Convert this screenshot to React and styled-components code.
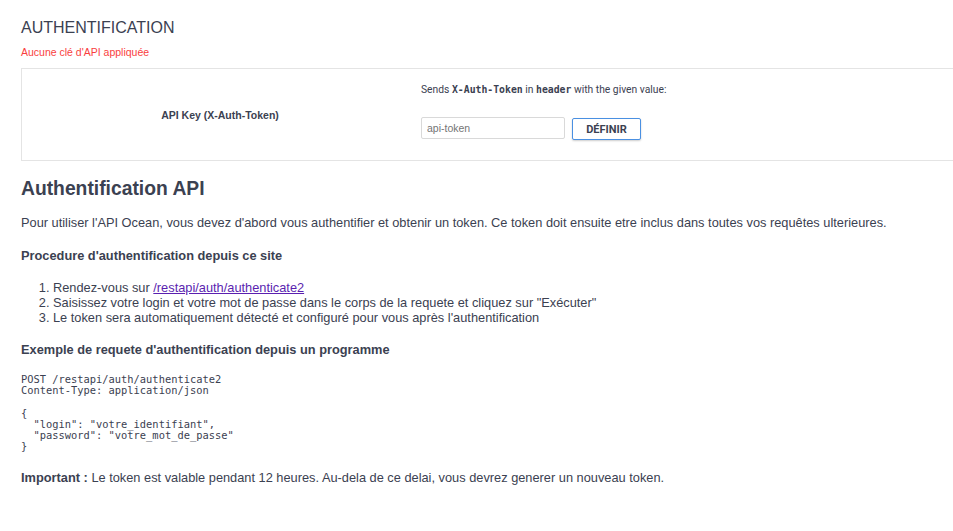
import React from 'react';
import styled, { createGlobalStyle } from 'styled-components';

const GlobalStyle = createGlobalStyle`
   html, body {
      margin: 0;
      padding: 0;
      background: #fff;
      overflow-x: hidden;
   }

   body {
      font-family: 'Liberation Sans', Arial, sans-serif;
      color: #3b4151;
   }
`;

const Page = styled.div`
   padding: 19px 0 40px 21px;
`;

const Title = styled.h4`
   margin: 0;
   font-size: 16px;
   font-weight: 400;
   line-height: 18px;
   text-transform: uppercase;
   color: #3b4151;
`;

const Warning = styled.p`
   margin: 9px 0 0;
   font-size: 10.5px;
   line-height: 13px;
   color: #f93e3e;
`;

const AuthBox = styled.div`
   margin-top: 9px;
   width: calc(100% + 20px);
   border: 1px solid #e4e4e4;
   display: grid;
   grid-template-columns: 396px 1fr;
   align-items: center;
   min-height: 90px;
`;

const KeyName = styled.div`
   text-align: center;
   font-size: 10.5px;
   font-weight: 700;
   color: #3b4151;
`;

const KeyForm = styled.div`
   padding: 14px 0 20px 3px;
   font-family: Roboto, 'Liberation Sans', sans-serif;
`;

const Hint = styled.p`
   margin: 0;
   font-size: 10.3px;
   line-height: 14px;
   color: #3b4151;

   code {
      font-family: 'DejaVu Sans Mono', monospace;
      font-weight: 700;
      font-size: 9.8px;
   }
`;

const FormRow = styled.div`
   display: flex;
   align-items: flex-start;
   gap: 7px;
   margin-top: 20px;
`;

const TokenInput = styled.input`
   box-sizing: border-box;
   width: 144px;
   height: 22px;
   padding: 0 5px;
   border: 1px solid #d9d9d9;
   border-radius: 2px;
   font-family: 'Liberation Sans', Arial, sans-serif;
   font-size: 10.5px;
   outline: none;

   ::placeholder {
      color: #9b9b9b;
   }
`;

const SetButton = styled.button`
   box-sizing: border-box;
   width: 69px;
   height: 22px;
   margin-top: 1px;
   border: 1px solid #4a90e2;
   border-radius: 2px;
   background: #fff;
   box-shadow: 0 1px 2px rgba(0, 0, 0, 0.2);
   font-family: Roboto, 'Liberation Sans', sans-serif;
   font-size: 11px;
   font-weight: 700;
   color: #3b4151;
   cursor: pointer;
`;

const Section = styled.section`
   padding-right: 20px;
   font-size: 12.8px;
   line-height: 15px;
   color: #3b4151;
`;

const Heading = styled.h2`
   margin: 17px 0 0;
   font-size: 19.3px;
   line-height: 22px;
   font-weight: 700;
`;

const Paragraph = styled.p`
   margin: ${({ top }) => top || 15}px 0 0;
`;

const SubHeading = styled.h3`
   margin: ${({ top }) => top || 18}px 0 0;
   font-size: 12.8px;
   line-height: 15px;
   font-weight: 700;
`;

const Steps = styled.ol`
   margin: 17px 0 0;
   padding-left: 32px;
`;

const Link = styled.a`
   color: #5b1fb0;
   text-decoration: underline;
`;

const Code = styled.pre`
   margin: 17px 0 0;
   font-family: 'DejaVu Sans Mono', monospace;
   font-size: 10.4px;
   line-height: 11.2px;
   color: #3b4151;
`;

const requestExample = `POST /restapi/auth/authenticate2
Content-Type: application/json

{
  "login": "votre_identifiant",
  "password": "votre_mot_de_passe"
}`;

const App = () => (
   <Page>
      <GlobalStyle />
      <Title>Authentification</Title>
      <Warning>Aucune clé d'API appliquée</Warning>
      <AuthBox>
         <KeyName>API Key (X-Auth-Token)</KeyName>
         <KeyForm>
            <Hint>
               Sends <code>X-Auth-Token</code> in <code>header</code> with the given value:
            </Hint>
            <FormRow>
               <TokenInput placeholder="api-token" />
               <SetButton>DÉFINIR</SetButton>
            </FormRow>
         </KeyForm>
      </AuthBox>
      <Section>
         <Heading>Authentification API</Heading>
         <Paragraph>
            Pour utiliser l'API Ocean, vous devez d'abord vous authentifier et obtenir un token. Ce
            token doit ensuite etre inclus dans toutes vos requêtes ulterieures.
         </Paragraph>
         <SubHeading>Procedure d'authentification depuis ce site</SubHeading>
         <Steps>
            <li>
               Rendez-vous sur <Link href="#">/restapi/auth/authenticate2</Link>
            </li>
            <li>Saisissez votre login et votre mot de passe dans le corps de la requete et cliquez sur "Exécuter"</li>
            <li>Le token sera automatiquement détecté et configuré pour vous après l'authentification</li>
         </Steps>
         <SubHeading top={17}>Exemple de requete d'authentification depuis un programme</SubHeading>
         <Code>{requestExample}</Code>
         <Paragraph top={18}>
            <strong>Important :</strong> Le token est valable pendant 12 heures. Au-dela de ce delai,
            vous devrez generer un nouveau token.
         </Paragraph>
      </Section>
   </Page>
);

export default App;
